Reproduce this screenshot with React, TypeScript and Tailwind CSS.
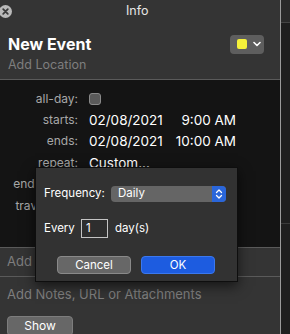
import React from "react";

const font = { fontFamily: "Inter, 'Noto Sans', sans-serif" };

function Row({ label, children }: { label: string; children?: React.ReactNode }) {
  return (
    <div className="flex h-[21.4px] items-center">
      <div className="w-[79px] text-right text-[12px] text-[#a8a8a8] pr-[1px] whitespace-nowrap">{label}</div>
      <div className="ml-[10px] w-[147px] flex items-center justify-between whitespace-nowrap">{children}</div>
    </div>
  );
}

export default function App() {
  return (
    <div className="w-[290px] h-[334px] overflow-hidden flex bg-[#1e1e1e]" style={font}>
      <div className="relative w-[281px] h-full border-r border-[#9a9a9a] bg-[#343434] flex flex-col">
        {/* title bar */}
        <div className="h-[22px] flex items-center shrink-0">
          <svg width="13" height="13" viewBox="0 0 13 13" className="-ml-[1px]">
            <circle cx="6.5" cy="6.5" r="6.5" fill="#b9b9b9" />
            <path d="M4.2 4.2 L8.8 8.8 M8.8 4.2 L4.2 8.8" stroke="#3a3a3a" strokeWidth="1.8" strokeLinecap="round" />
          </svg>
          <div className="ml-[114px] text-[12.5px] text-[#e6e6e6]">Info</div>
        </div>
        {/* header */}
        <div className="h-[58px] shrink-0 border-b border-[#5a5a5a] px-[8px] pt-[11px]">
          <div className="flex items-center justify-between">
            <div className="text-[16px] font-bold text-white leading-[22px]">New Event</div>
            <div className="mr-[8px] w-[34px] h-[19px] rounded-[4px] bg-[#5e5e5e] flex items-center pl-[7px]">
              <div className="w-[10px] h-[10px] rounded-[2px] bg-[#f6f23a]" />
              <svg width="8" height="6" viewBox="0 0 8 6" className="ml-[6px]">
                <path d="M1 1.5 L4 4.5 L7 1.5" stroke="#ffffff" strokeWidth="1.6" fill="none" strokeLinecap="round" strokeLinejoin="round" />
              </svg>
            </div>
          </div>
          <div className="text-[12.5px] text-[#7e7e7e] leading-[18px] mt-[1px]">Add Location</div>
        </div>
        {/* dark details */}
        <div className="h-[168px] shrink-0 bg-[#141414] pt-[8px] border-b border-[#5a5a5a]">
          <Row label="all-day:">
            <div className="w-[12px] h-[12px] rounded-[3px] bg-[#5a5a5a] border border-[#8a8a8a]" />
          </Row>
          <Row label="starts:">
            <span className="text-[13.5px] text-white">02/08/2021</span>
            <span className="text-[13.5px] text-white">9:00 AM</span>
          </Row>
          <Row label="ends:">
            <span className="text-[13.5px] text-white">02/08/2021</span>
            <span className="text-[13.5px] text-white">10:00 AM</span>
          </Row>
          <Row label="repeat:">
            <span className="text-[13.5px] text-white">Custom...</span>
          </Row>
          <Row label="end repeat:" />
          <Row label="travel time:" />
        </div>
        {/* add invitees */}
        <div className="h-[29px] shrink-0 border-b border-[#5a5a5a] px-[7px] flex items-center text-[13px] text-[#7e7e7e]">
          Add Invitees
        </div>
        <div className="px-[7px] pt-[8px] text-[13px] text-[#7e7e7e] leading-[18px]">Add Notes, URL or Attachments</div>
        <div className="ml-[7px] mt-[13px] w-[66px] h-[22px] rounded-[4px] bg-[#676767] border border-[#7d7d7d] text-[12px] text-white flex items-center justify-center">
          Show
        </div>

        {/* popover */}
        <div className="absolute left-[35px] top-[167px] w-[203px] h-[115px] bg-[#323232] border border-[#0e0e0e] shadow-[0_4px_12px_rgba(0,0,0,0.6)] flex flex-col px-[8px]">
          <div className="flex items-center mt-[17px]">
            <span className="w-[67px] text-[11.5px] text-white">Frequency:</span>
            <div className="w-[115px] h-[16px] rounded-[4px] bg-[#656565] flex items-center overflow-hidden">
              <span className="ml-[7px] flex-1 text-[11.5px] text-white">Daily</span>
              <div className="w-[14px] h-full bg-[#2a66da] flex items-center justify-center">
                <svg width="8" height="12" viewBox="0 0 8 12">
                  <path d="M1.5 4.5 L4 2 L6.5 4.5 M1.5 7.5 L4 10 L6.5 7.5" stroke="#ffffff" strokeWidth="1.3" fill="none" strokeLinecap="round" strokeLinejoin="round" />
                </svg>
              </div>
            </div>
          </div>
          <div className="flex items-center mt-[17px]">
            <span className="w-[37px] text-[11.5px] text-white">Every</span>
            <div className="w-[27px] h-[19px] border border-[#c4c4c4] bg-[#2e2e2e] text-[11.5px] text-white flex items-center pl-[4px]">1</div>
            <span className="ml-[7px] text-[11.5px] text-white">day(s)</span>
          </div>
          <div className="flex items-center mt-[18px] ml-[13px]">
            <div className="w-[74px] h-[18px] rounded-[4px] bg-[#676767] border border-[#8a8a8a] text-[11.5px] text-white flex items-center justify-center">Cancel</div>
            <div className="ml-[10px] w-[74px] h-[18px] rounded-[4px] bg-[#1d5ce0] border border-[#3b78ee] text-[11.5px] text-white flex items-center justify-center">OK</div>
          </div>
        </div>
      </div>
      <div className="flex-1 flex flex-col">
        <div className="h-[23px] bg-[#2a2a2a] border-b border-[#444]" />
        <div className="h-[200px]" />
        <div className="border-t border-[#3a3a3a]" />
      </div>
    </div>
  );
}
